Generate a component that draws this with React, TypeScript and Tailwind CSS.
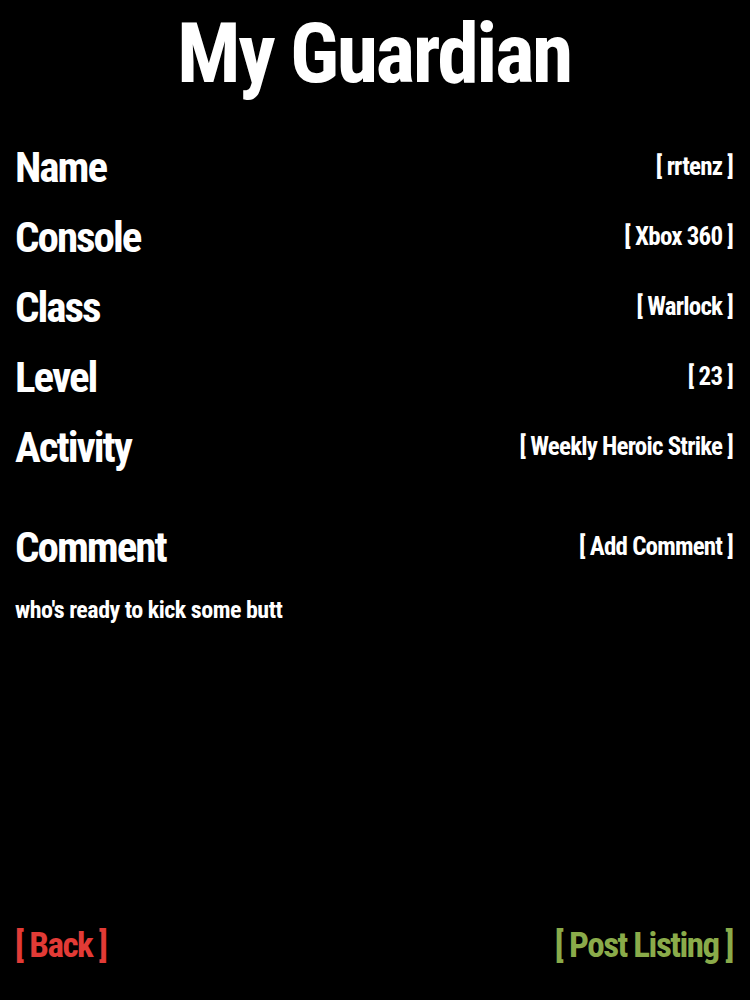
import React from "react";

const rows = [
  { label: "Name", value: "rrtenz" },
  { label: "Console", value: "Xbox 360" },
  { label: "Class", value: "Warlock" },
  { label: "Level", value: "23" },
  { label: "Activity", value: "Weekly Heroic Strike" },
];

const App: React.FC = () => {
  return (
    <div className="w-[750px] h-[1000px] bg-black text-white flex flex-col pl-[15px] pr-[17px] font-bold font-stretch-condensed font-[Roboto,'Open_Sans',sans-serif]">
      <h1 className="text-center text-[84px] leading-none pt-[12px] tracking-[-2.5px]">My Guardian</h1>

      <div className="flex flex-col mt-[36px]">
        {rows.map((r) => (
          <div key={r.label} className="flex items-center justify-between h-[70px]">
            <span className="text-[43px] tracking-[-2px]">{r.label}</span>
            <span className="text-[25px] tracking-[-0.8px]">[ {r.value} ]</span>
          </div>
        ))}
      </div>

      <div className="flex items-center justify-between h-[70px] mt-[30px]">
        <span className="text-[43px] tracking-[-2px]">Comment</span>
        <span className="text-[25px] tracking-[-0.8px]">[ Add Comment ]</span>
      </div>
      <p className="text-[24px] tracking-[-0.5px] mt-[10px]">who's ready to kick some butt</p>

      <div className="mt-auto flex items-center justify-between pb-[28px]">
        <span className="text-[35px] text-[#e23b36] tracking-[-1.5px]">[ Back ]</span>
        <span className="text-[35px] text-[#8aab4a] tracking-[-1.5px]">[ Post Listing ]</span>
      </div>
    </div>
  );
};

export default App;
